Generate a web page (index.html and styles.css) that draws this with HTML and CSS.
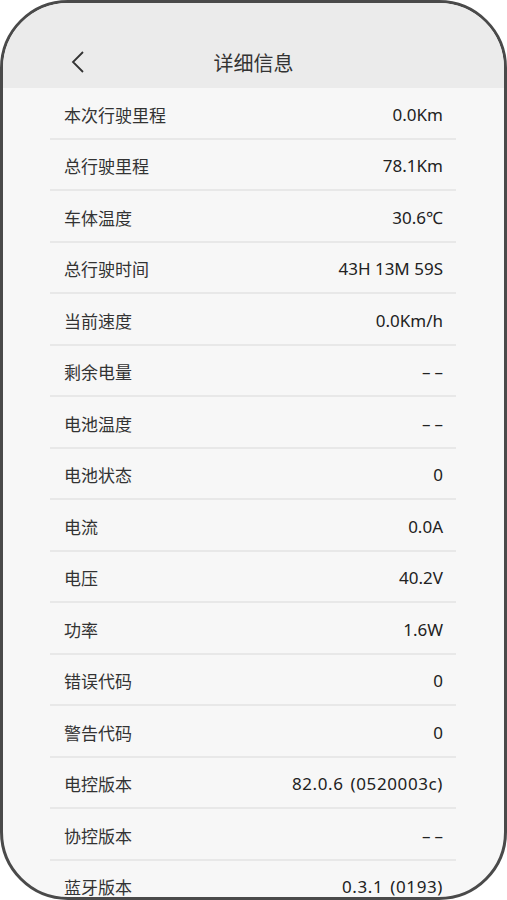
FILE: index.html
```html
<!DOCTYPE html>
<html lang="zh-CN">

<head>
    <meta charset="UTF-8" />
    <title>详细信息</title>
    <link rel="stylesheet" href="styles.css">
</head>

<body>

    <div class="phone">
        <div class="cabecalho">
            <div class="nav">
                <svg class="voltar" width="14" height="22" viewBox="0 0 14 22">
                    <path d="M12 1 L2 11 L12 21" fill="none" stroke="#333" stroke-width="1.8" />
                </svg>
                <h1>详细信息</h1>
            </div>
        </div>

        <ul class="lista">
            <li><span class="rotulo">本次行驶里程</span><span class="valor">0.0Km</span></li>
            <li><span class="rotulo">总行驶里程</span><span class="valor">78.1Km</span></li>
            <li><span class="rotulo">车体温度</span><span class="valor">30.6℃</span></li>
            <li><span class="rotulo">总行驶时间</span><span class="valor">43H 13M 59S</span></li>
            <li><span class="rotulo">当前速度</span><span class="valor">0.0Km/h</span></li>
            <li><span class="rotulo">剩余电量</span><span class="valor vazio">––</span></li>
            <li><span class="rotulo">电池温度</span><span class="valor vazio">––</span></li>
            <li><span class="rotulo">电池状态</span><span class="valor">0</span></li>
            <li><span class="rotulo">电流</span><span class="valor">0.0A</span></li>
            <li><span class="rotulo">电压</span><span class="valor">40.2V</span></li>
            <li><span class="rotulo">功率</span><span class="valor">1.6W</span></li>
            <li><span class="rotulo">错误代码</span><span class="valor">0</span></li>
            <li><span class="rotulo">警告代码</span><span class="valor">0</span></li>
            <li><span class="rotulo">电控版本</span><span class="valor versao">82.0.6 (0520003c)</span></li>
            <li><span class="rotulo">协控版本</span><span class="valor vazio">––</span></li>
            <li><span class="rotulo">蓝牙版本</span><span class="valor versao">0.3.1 (0193)</span></li>
        </ul>
    </div>

</body>

</html>
```

FILE: styles.css
```css
body {
    margin: 0;
    background-color: #ffffff;
    font-family: "Noto Sans", "Noto Sans CJK SC", sans-serif;
}

.phone {
    width: 507px;
    height: 900px;
    box-sizing: border-box;
    border: 3px solid #4a4a4a;
    border-radius: 68px;
    overflow: hidden;
    background-color: #f7f7f7;
}

.cabecalho {
    background-color: #ebebeb;
    height: 85px;
    padding-top: 33px;
    box-sizing: border-box;
}

.nav {
    position: relative;
    height: 52px;
    display: flex;
    align-items: center;
    justify-content: center;
}

.voltar {
    position: absolute;
    left: 68px;
    top: 15px;
}

h1 {
    margin: 0;
    font-family: "Noto Sans CJK SC", sans-serif;
    font-size: 20px;
    font-weight: 400;
    color: #333;
}

.lista {
    list-style: none;
    margin: 0 48px 0 47px;
    padding: 0;
}

.lista li {
    height: 51.5px;
    box-sizing: border-box;
    border-bottom: 2px solid #e8e8e8;
    padding: 3px 13px 0 14px;
    display: flex;
    justify-content: space-between;
    align-items: center;
}

.rotulo {
    font-family: "Noto Sans CJK SC", sans-serif;
    font-size: 17px;
    color: #333;
}

.valor {
    font-size: 17px;
    color: #222;
}

.versao {
    letter-spacing: 0.6px;
    word-spacing: 2px;
}

.vazio {
    letter-spacing: 4px;
    margin-right: -4px;
}
```
